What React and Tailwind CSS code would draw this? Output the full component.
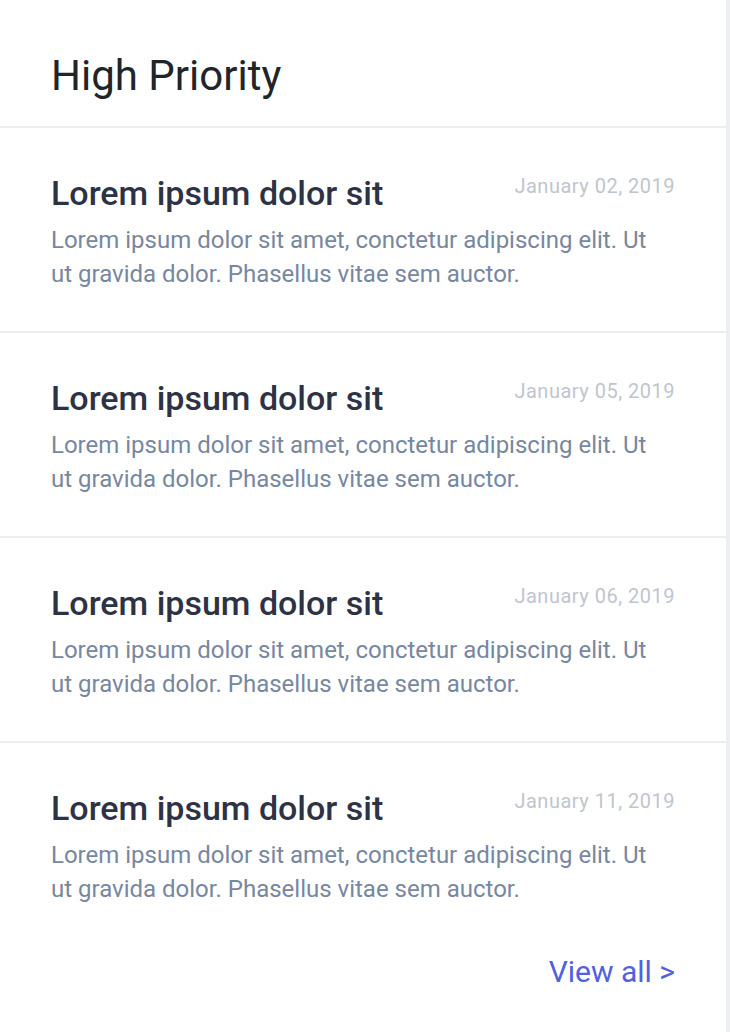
const items = [
  { title: "Lorem ipsum dolor sit", date: "January 02, 2019" },
  { title: "Lorem ipsum dolor sit", date: "January 05, 2019" },
  { title: "Lorem ipsum dolor sit", date: "January 06, 2019" },
  { title: "Lorem ipsum dolor sit", date: "January 11, 2019" },
];

function Item({ title, date, last }) {
  return (
    <div className={`px-[51px] pt-[45px] ${last ? "" : "pb-[40px] border-b-2 border-[#eceef1]"}`}>
      <div className="flex items-start justify-between">
        <h3 className="text-[34px] leading-[40px] font-medium text-[#2d3244]">{title}</h3>
        <span className="pt-[1px] text-[20px] leading-[24px] tracking-[0.5px] text-[#bfc5cf]">{date}</span>
      </div>
      <p className="mt-[10px] max-w-[600px] text-[24px] leading-[34px] text-[#7787a0]">
        Lorem ipsum dolor sit amet, conctetur adipiscing elit. Ut ut gravida dolor. Phasellus vitae sem auctor.
      </p>
    </div>
  );
}

export default function App() {
  return (
    <div className="flex min-h-[1032px] bg-[#eeeff2] font-['Roboto',sans-serif]">
      <div className="w-[726px] bg-white">
        <div className="px-[51px] pt-[51px] pb-[25px] border-b-2 border-[#eceef1]">
          <h2 className="text-[42px] leading-[50px] text-[#222428]">High Priority</h2>
        </div>
        {items.map((item, i) => (
          <Item key={i} {...item} last={i === items.length - 1} />
        ))}
        <div className="flex justify-end px-[51px] pt-[48px] pb-[41px]">
          <a href="#" className="text-[30px] leading-[36px] text-[#5060e0]">View all &gt;</a>
        </div>
      </div>
    </div>
  );
}
